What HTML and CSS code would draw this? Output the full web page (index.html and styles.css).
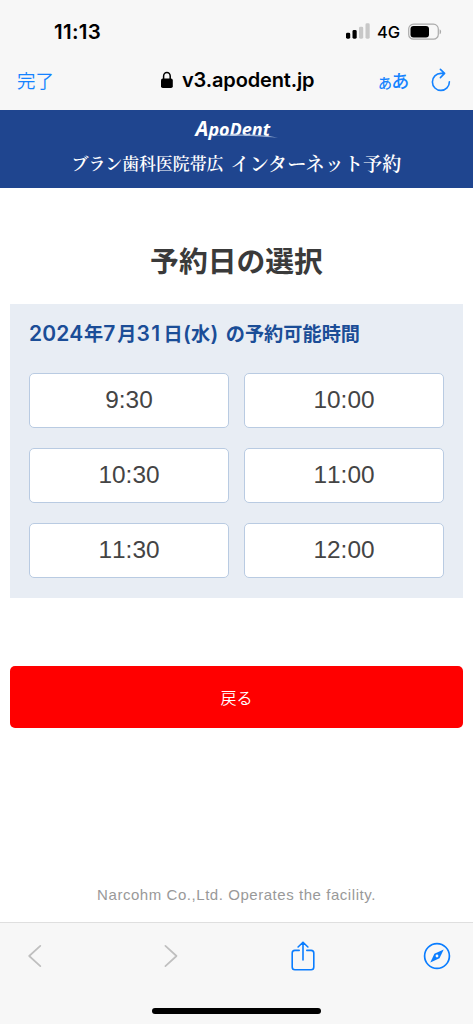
FILE: index.html
```html
<!DOCTYPE html>
<html lang="ja">
<head>
<meta charset="utf-8">
<meta name="viewport" content="width=device-width, initial-scale=1">
<title>予約日の選択</title>
<link rel="stylesheet" href="styles.css">
</head>
<body>
<div class="screen">
  <div class="status">
    <span class="clock">11:13</span>
    <div class="status-right">
      <svg class="signal" width="24" height="16" viewBox="0 0 24 16"><rect x="0" y="9.7" width="4.2" height="6" rx="1.4"/><rect x="6.5" y="7" width="4.2" height="8.7" rx="1.4"/><g fill="#c8c8c8"><rect x="13" y="3.7" width="4.2" height="12" rx="1.4"/><rect x="19.5" y="0.3" width="4.2" height="15.4" rx="1.4"/></g></svg>
      <span class="net">4G</span>
      <svg class="battery" width="34" height="18" viewBox="0 0 34 18"><rect x=".7" y="1.2" width="29.6" height="15" rx="4.8" fill="none" stroke="#aaa" stroke-width="1.2"/><rect x="2.5" y="3" width="18.5" height="11.4" rx="3"/><path d="M31.6 6.2c2 .9 2 4.2 0 5.1z" fill="#aaa"/></svg>
    </div>
  </div>
  <div class="nav">
    <span class="done">完了</span>
    <div class="address">
      <svg width="12" height="18" viewBox="0 0 12 18"><rect x="0" y="7.6" width="11.8" height="9.4" rx="1.8"/><path d="M2.6 8.2V5.1a3.3 3.7 0 0 1 6.6 0v3.1" fill="none" stroke="#000" stroke-width="1.5"/></svg>
      <span>v3.apodent.jp</span>
    </div>
    <div class="nav-right">
      <span class="reader"><small>あ</small>あ</span>
      <svg class="reload" width="20" height="24" viewBox="0 0 20 24" fill="none" stroke="#1583ff" stroke-width="1.6" stroke-linecap="round" stroke-linejoin="round"><path d="M18.4 13.8a8.5 8.5 0 1 1-8.5-8.4h2.8M9.4 1.4l4.2 4-4.2 4.2"/></svg>
    </div>
  </div>
  <header class="site">
    <div class="logo"><span>A</span>poDent
      <svg class="swoosh" width="84" height="7" viewBox="0 0 84 7"><path d="M14 4.2C34 1.6 67 1.6 83 5.8 64 3.6 36 3.4 14 4.2z" fill="#9bb0d4"/></svg>
    </div>
    <div class="clinic"><span class="clinic-name">ブラン歯科医院帯広</span><span class="clinic-service">インターネット予約</span></div>
  </header>
  <main>
    <h1>予約日の選択</h1>
    <section class="panel">
      <h2><b class="year">2024</b>年<b class="month">7</b>月<b class="day">31</b>日<b class="paren">(</b>水<b class="paren">)</b><span class="rest">の予約可能時間</span></h2>
      <div class="slots">
        <div class="slot">9:30</div><div class="slot">10:00</div>
        <div class="slot">10:30</div><div class="slot">11:00</div>
        <div class="slot">11:30</div><div class="slot">12:00</div>
      </div>
    </section>
    <div class="back">戻る</div>
  </main>
  <footer class="credit">Narcohm Co.,Ltd. Operates the facility.</footer>
  <div class="toolbar">
    <div class="tools">
      <svg width="14" height="24" viewBox="0 0 14 24" fill="none" stroke="#bfbfbf" stroke-width="1.7" stroke-linecap="round" stroke-linejoin="round"><path d="M12.3 1.8 1.2 12l11.1 10.2"/></svg>
      <svg class="forward" width="14" height="24" viewBox="0 0 14 24" fill="none" stroke="#bfbfbf" stroke-width="1.7" stroke-linecap="round" stroke-linejoin="round"><path d="M1.4 1.8 12.5 12 1.4 22.2"/></svg>
      <svg class="share" width="24" height="30" viewBox="0 0 24 30" fill="none" stroke="#0a7dff" stroke-width="1.6" stroke-linecap="round" stroke-linejoin="round"><path d="M8.2 9.4H3.9A2.7 2.7 0 0 0 1.2 12.1v13.9a2.7 2.7 0 0 0 2.7 2.7h16.2a2.7 2.7 0 0 0 2.7-2.7V12.1a2.7 2.7 0 0 0-2.7-2.7h-4.3M12 18.9V1.4M7.1 6 12 1.2 16.9 6"/></svg>
      <svg class="compass" width="28" height="28" viewBox="0 0 28 28"><circle cx="14" cy="14" r="12.4" fill="none" stroke="#0a7dff" stroke-width="1.7"/><path d="M20.7 7.4 16.5 16.2 7.3 20.6 11.4 11.7z" fill="#0a7dff"/><circle cx="14" cy="14" r="1.4" fill="#f7f7f7"/></svg>
    </div>
    <div class="home"></div>
  </div>
</div>
</body>
</html>
```
FILE: styles.css
```css
* { box-sizing: border-box; }
body { margin: 0; background: #fff; font-family: "Inter", "Noto Sans CJK JP", sans-serif; color: #3a3a3a; }
svg { display: block; flex: none; }
.screen { width: 473px; height: 1024px; display: flex; flex-direction: column; overflow: hidden; }
.status { height: 58px; flex: none; background: #f7f7f7; display: flex; justify-content: space-between; padding: 19px 31px 0 54px; color: #000; }
.clock { font-weight: 600; font-size: 20.5px; line-height: 26px; letter-spacing: .3px; }
.status-right { display: flex; align-items: flex-start; padding-top: 4px; }
.net { font-size: 16.5px; font-weight: 450; line-height: 20px; margin: -1px 0 0 7px; width: 31px; letter-spacing: -.1px; }
.nav { height: 52px; flex: none; background: #f7f7f7; display: flex; align-items: flex-start; color: #1583ff; }
.done { margin-left: 17px; width: 144px; font: 350 18.5px/28px "Noto Sans CJK JP", sans-serif; padding-top: 8px; }
.address { display: flex; width: 217px; gap: 9px; color: #000; font-size: 20px; font-weight: 600; line-height: 27px; letter-spacing: -.15px; padding-top: 9px; }
.address svg { margin-top: 4px; }
.nav-right { display: flex; }
.reader { width: 53px; font: 500 18px/28px "Noto Sans CJK JP", sans-serif; padding-top: 8px; white-space: nowrap; letter-spacing: -.8px; }
.reader small { font-size: 14px; }
.reload { margin-top: 10px; }
.site { height: 78px; flex: none; background: #1f458f; color: #fff; text-align: center; }
.logo { position: relative; width: 84px; height: 38px; margin: 0 auto; padding-left: 1px; font: italic 700 18px/36px "Open Sans", sans-serif; white-space: nowrap; text-align: left; }
.logo span { font-size: 20.5px; }
.swoosh { position: absolute; left: 0; top: 22px; }
.clinic { display: flex; justify-content: center; gap: 7px; font-family: "Noto Serif CJK JP", "Noto Sans CJK JP", serif; font-weight: 600; line-height: 30px; white-space: nowrap; }
.clinic-name { font-size: 16.9px; }
.clinic-service { font-size: 19.2px; }
h1 { margin: 0; height: 116px; padding-top: 50px; text-align: center; font: 700 28.8px/44px "Noto Sans CJK JP", sans-serif; }
.panel { margin: 0 10px; height: 294px; background: #e8edf4; padding: 14px 19px 0; }
h2 { margin: 0; height: 55px; display: flex; font: 700 19.2px/31px "Noto Sans CJK JP", sans-serif; color: #1b4d97; white-space: nowrap; }
h2 b { font: 600 21px/31px "Inter", sans-serif; }
h2 .year { width: 55px; letter-spacing: .2px; }
h2 .month { width: 14px; }
h2 .day { width: 27px; letter-spacing: 1.5px; }
h2 .paren { width: 8.5px; text-align: center; }
.rest { margin-left: 7px; }
.slots { display: grid; grid-template-columns: 200px 200px; gap: 20px 15px; }
.slot { height: 55px; border: 1px solid #b9cbe2; border-radius: 5px; background: #fff; text-align: center; font: 400 24.4px/52px "Liberation Sans", sans-serif; font-kerning: none; color: #444; }
.back { margin: 68px 10px 0; height: 62px; border-radius: 5px; background: #f00; color: #fff; text-align: center; font: 350 16px/62px "Noto Sans CJK JP", sans-serif; }
.credit { margin-top: auto; height: 39px; text-align: center; font: 400 15px/24px "Liberation Sans", sans-serif; letter-spacing: .55px; color: #999; }
.toolbar { height: 102px; flex: none; background: #f7f7f7; border-top: 1px solid #dfdfdf; display: flex; flex-direction: column; align-items: center; justify-content: space-between; padding: 18px 0 10px; }
.tools { width: 100%; display: flex; align-items: center; padding: 0 22px 0 28px; }
.forward { margin-left: 122px; }
.share { margin-left: 113px; }
.compass { margin-left: auto; }
.home { width: 169px; height: 6px; border-radius: 3px; background: #000; }
```
